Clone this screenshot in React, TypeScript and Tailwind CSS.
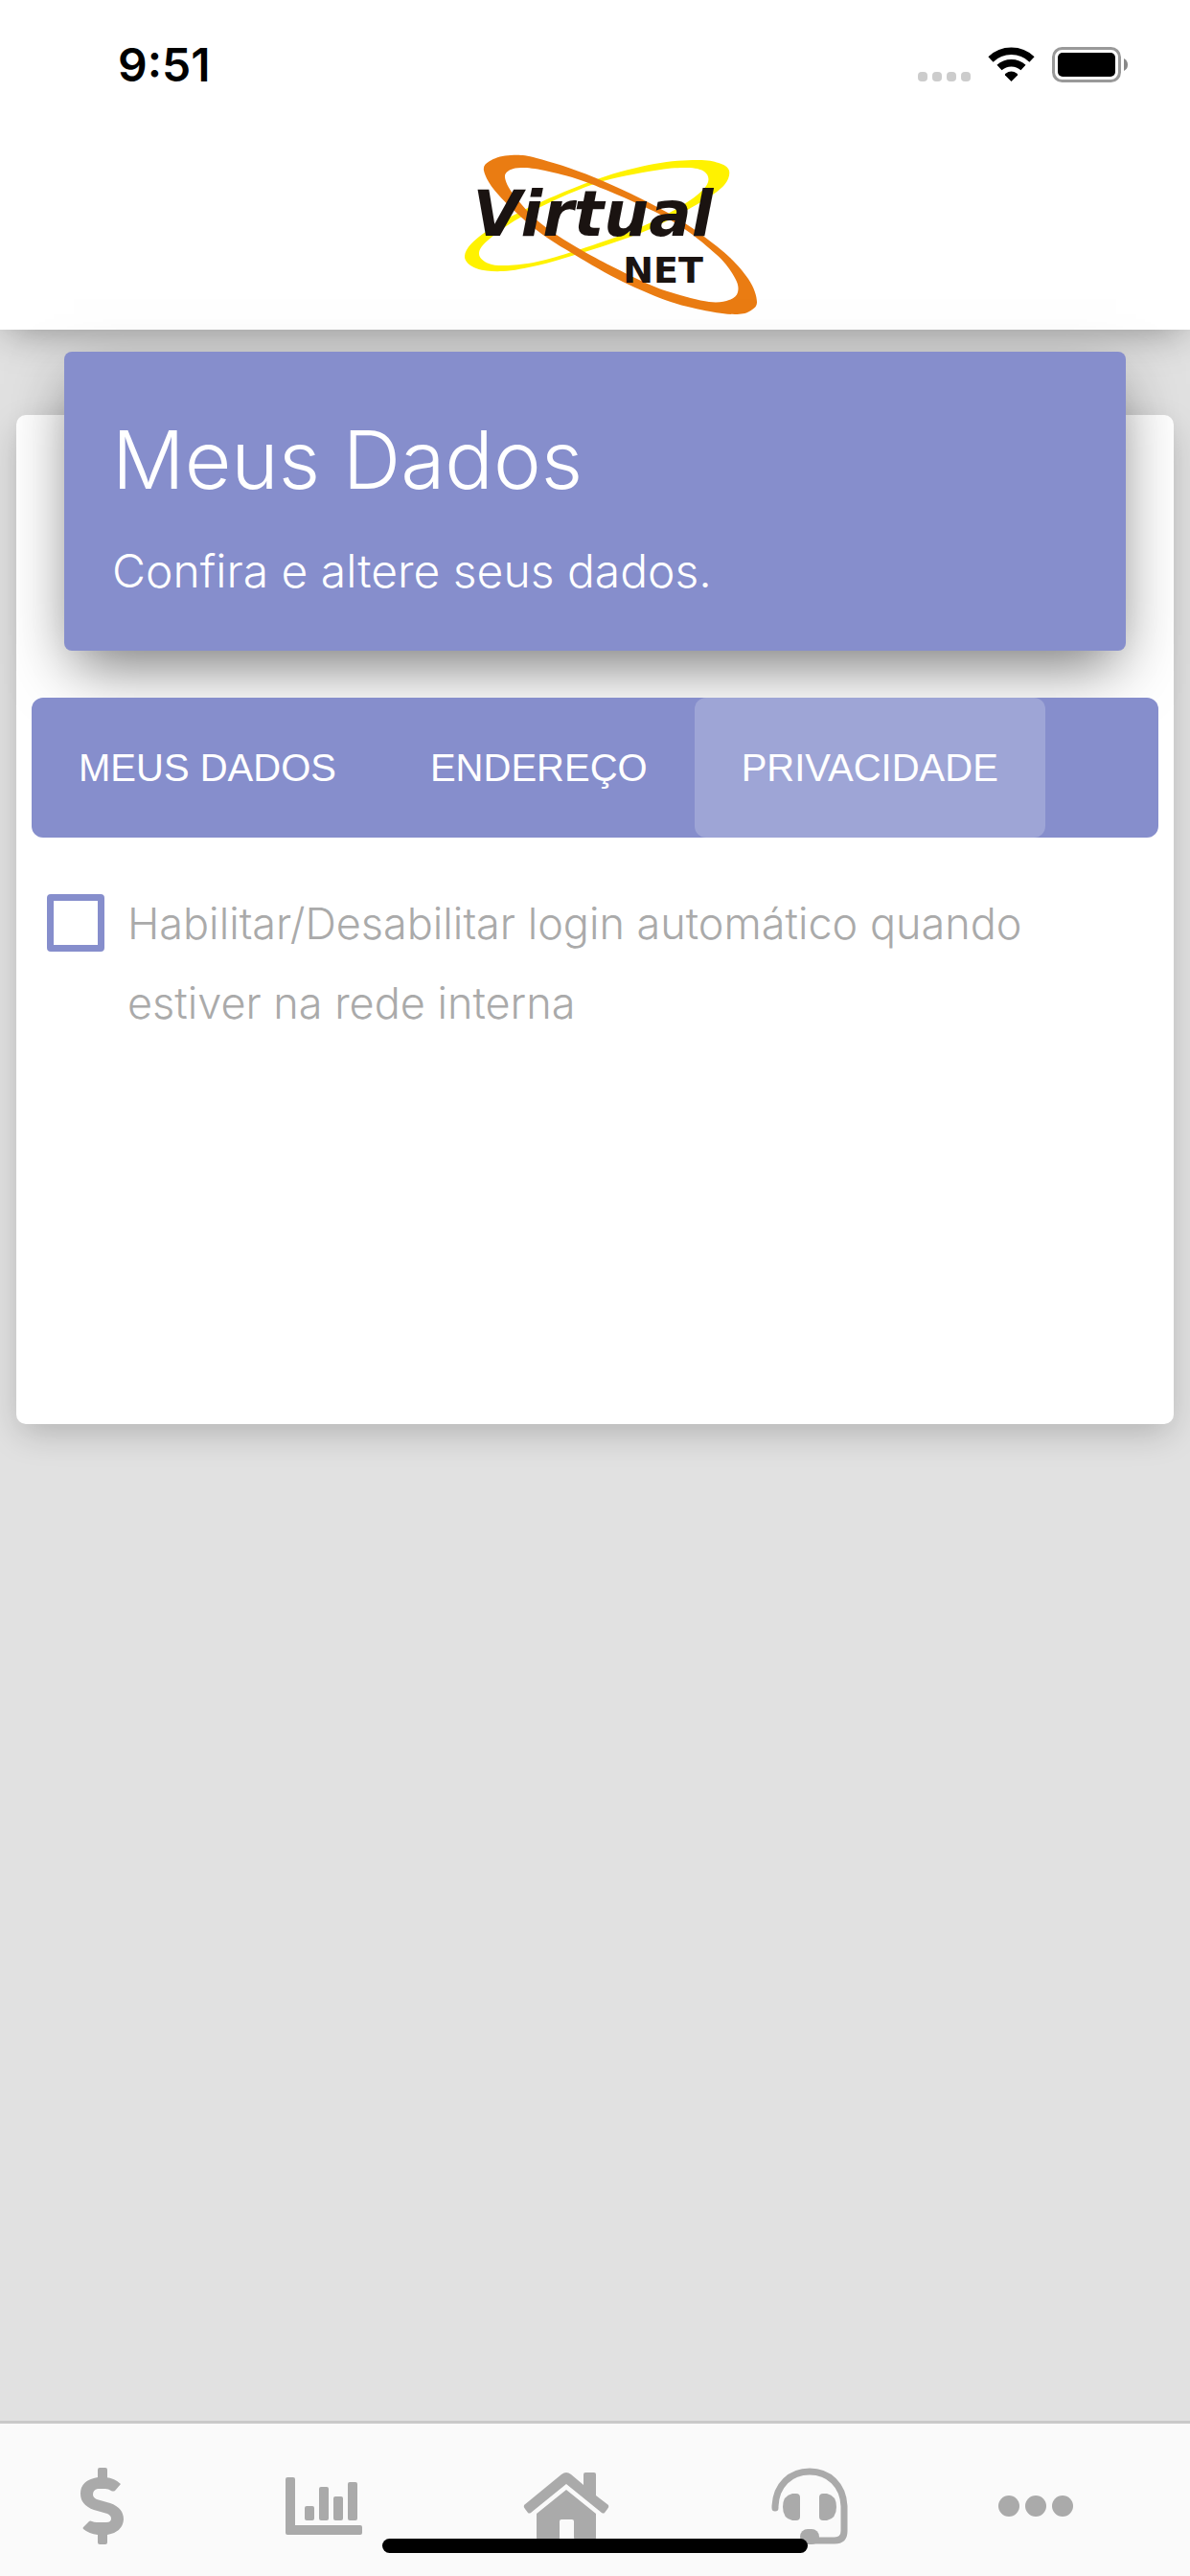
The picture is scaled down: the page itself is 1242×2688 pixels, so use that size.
import { useState } from "react";

const tabs = ["MEUS DADOS", "ENDEREÇO", "PRIVACIDADE"];

type Point = [number, number];

// closed smooth curve through the given points
function loop(points: Point[]) {
  const n = points.length;
  let d = `M${points[0][0]} ${points[0][1]}`;
  for (let i = 0; i < n; i++) {
    const [p0, p1, p2, p3] = [-1, 0, 1, 2].map((k) => points[(i + k + n) % n]);
    d += ` C${p1[0] + (p2[0] - p0[0]) / 6} ${p1[1] + (p2[1] - p0[1]) / 6}`;
    d += ` ${p2[0] - (p3[0] - p1[0]) / 6} ${p2[1] - (p3[1] - p1[1]) / 6}`;
    d += ` ${p2[0]} ${p2[1]}`;
  }
  return d + " Z";
}

const yellowRing =
  loop([[64, 107], [76, 120], [104, 123], [140, 117], [179, 106], [220, 93], [262, 77], [312, 50], [335, 33], [340, 18], [329, 10], [306, 7], [262, 11], [202, 27], [126, 59], [79, 87]]) +
  loop([[79, 105], [89, 115], [109, 117], [140, 113], [179, 102], [236, 82], [276, 63], [306, 44], [318, 30], [314, 19], [296, 15], [262, 18], [199, 32], [129, 63], [89, 90]]);

const orangeRing =
  loop([[84, 18], [92, 7], [112, 2], [139, 5], [199, 25], [276, 62], [332, 101], [360, 131], [369, 155], [361, 165], [346, 168], [320, 165], [279, 155], [229, 134], [179, 106], [139, 80], [99, 43]]) +
  loop([[106, 25], [112, 17], [126, 15], [152, 19], [196, 32], [276, 68], [326, 105], [346, 130], [349, 145], [340, 153], [319, 155], [279, 145], [246, 132], [186, 101], [142, 72], [115, 43]]);

function StatusBar() {
  return (
    <div className="flex items-center justify-between pl-[123px] pr-16 pt-11">
      <span className="font-['Inter'] text-5xl font-semibold leading-[48px] text-black">9:51</span>
      <svg viewBox="0 0 220 40" className="h-10 w-[220px]" aria-hidden="true">
        <g fill="#cccccc">
          <rect x="0" y="27" width="10" height="10" rx="4" />
          <rect x="15" y="27" width="10" height="10" rx="4" />
          <rect x="30" y="27" width="10" height="10" rx="4" />
          <rect x="45" y="27" width="10" height="10" rx="4" />
        </g>
        <g fill="none" stroke="#000" strokeWidth="7.5">
          <path d="M76 14 A31 31 0 0 1 119 14" />
          <path d="M85 22.500 A18.500 18.500 0 0 1 110 22.500" />
        </g>
        <path d="M97.500 37 L91 30.500 Q90.500 29.500 91.500 28.700 Q97.500 24.500 103.500 28.700 Q104.500 29.500 104 30.500 Z" />
        <rect x="141.500" y="2.500" width="69" height="34" rx="9" fill="none" stroke="#999" strokeWidth="3" />
        <rect x="146" y="7" width="60" height="25" rx="5" />
        <path d="M215 13 Q219 15 219 19.500 Q219 24 215 26 Z" fill="#888" />
      </svg>
    </div>
  );
}

function Logo() {
  return (
    <svg viewBox="0 0 400 170" className="h-[170px] w-[400px]" role="img" aria-label="Virtual NET">
      <path fill="#fff200" fillRule="evenodd" d={yellowRing} />
      <path fill="#ea7c12" fillRule="evenodd" d={orangeRing} />
      <g fill="#1a1311" fontFamily="DejaVu Sans" fontWeight="700" textAnchor="middle">
        <text x="198" y="86" fontSize="66" fontStyle="italic">Virtual</text>
        <text x="271" y="135" fontSize="38">NET</text>
      </g>
    </svg>
  );
}

function FooterNav() {
  return (
    <footer className="relative border-t-[3px] border-[#c9c9c9] bg-[#fafafa]">
      <nav className="grid h-[159px] grid-cols-[212fr_252fr_254fr_253fr_220fr] items-center justify-items-center pr-[51px] pt-3 text-[#aaaaaa]">
        <button aria-label="Financeiro">
          <svg viewBox="0 0 80 80" className="size-20" fill="currentColor">
            <path d="M36 10 H44 Q54 11 60 17 L54 24 Q52 25 50 24 Q47 22 44 22 H36 Q31 23 31 28 Q31 31 35 33 L49 37 Q63 42 63 54 Q62 67 46 70 H36 Q27 69 21 64 Q20 63 21 62 L27 56 Q28 55 30 56 Q32 57 35 57 H45 Q50 57 50 53 Q50 50 46 48 L32 44 Q18 39 18 27 Q18 13 36 10 Z" />
            <rect x="36" y="0" width="10" height="16" rx="2" />
            <rect x="36" y="64" width="10" height="16" rx="2" />
          </svg>
        </button>
        <button aria-label="Consumo">
          <svg viewBox="0 0 80 80" className="size-20" fill="currentColor">
            <path d="M0 12 Q0 10 2 10 H8 Q10 10 10 12 V60 H78 Q80 60 80 62 V68 Q80 70 78 70 H2 Q0 70 0 68 Z" />
            <rect x="20" y="40" width="10" height="15" rx="2" />
            <rect x="35" y="20" width="10" height="35" rx="2" />
            <rect x="50" y="30" width="10" height="25" rx="2" />
            <rect x="65" y="15" width="10" height="40" rx="2" />
          </svg>
        </button>
        <button aria-label="Início">
          <svg viewBox="0 0 90 80" className="h-20 w-[90px]" fill="currentColor">
            <path d="M1 39 L40 7 Q45 3 50 7 L63 18 V7 Q63 5 65 5 H74 Q76 5 76 7 V29 L89 39 Q90 41 88 43 L85 47 Q84 48 82 47 L45 17 L8 47 Q6 48 5 47 L2 43 Q0 41 1 39 Z" />
            <path d="M45 23 L76 48 V73 Q76 75 73 75 H55 Q53 75 53 73 V56 Q53 54 51 54 H40 Q38 54 38 56 V73 Q38 75 35 75 H17 Q14 75 14 73 V48 Z" />
          </svg>
        </button>
        <button aria-label="Suporte">
          <svg viewBox="0 0 80 80" className="size-20" fill="none" stroke="currentColor">
            <path d="M4 42 V40 C5 18 20 4 40 4 C60 4 75 18 76 40 V66 Q76 76 66 76 H42" strokeWidth="7" strokeLinecap="round" />
            <g fill="currentColor" stroke="none">
              <path d="M22 27 H26 Q30 27 30 31 V51 Q30 55 26 55 H22 Q12 53 12 41 Q12 29 22 27 Z" />
              <path d="M54 27 H58 Q68 29 68 41 Q68 53 58 55 H54 Q50 55 50 51 V31 Q50 27 54 27 Z" />
              <rect x="30" y="64" width="20" height="16" rx="8" />
            </g>
          </svg>
        </button>
        <button aria-label="Mais opções">
          <svg viewBox="0 0 78 80" className="h-20 w-[78px]" fill="currentColor">
            <circle cx="11" cy="40" r="11" />
            <circle cx="39" cy="40" r="11" />
            <circle cx="67" cy="40" r="11" />
          </svg>
        </button>
      </nav>
      <div className="absolute bottom-6 left-1/2 h-[15px] w-[444px] -translate-x-1/2 rounded-full bg-black" />
    </footer>
  );
}

export default function App() {
  const [active, setActive] = useState("PRIVACIDADE");
  const [autoLogin, setAutoLogin] = useState(false);

  return (
    <div className="flex min-h-screen flex-col bg-[#e1e1e1] font-['Inter',sans-serif]">
      <header className="bg-white shadow-[0_8px_40px_-8px_rgba(0,0,0,0.4)]">
        <StatusBar />
        <div className="flex justify-center pb-[14px] pt-[68px]">
          <Logo />
        </div>
      </header>

      <main className="flex-1 px-[17px] pt-[89px]">
        <section className="flex min-h-[1053px] flex-col rounded-[10px] bg-white px-4 shadow-[0_12px_36px_-4px_rgba(0,0,0,0.22)]">
          <div className="mx-[34px] -mt-[66px] rounded-lg bg-[#868ecc] px-[50px] pb-[43px] pt-[59px] text-white shadow-[0_24px_60px_-10px_rgba(0,0,0,0.55)]">
            <h1 className="text-[84px] font-light leading-[108px]">Meus Dados</h1>
            <p className="mt-[22px] text-[48px] font-light leading-[80px]">Confira e altere seus dados.</p>
          </div>

          <div role="tablist" className="mt-[49px] flex rounded-xl bg-[#868ecc] text-white">
            {tabs.map((tab) => (
              <button
                key={tab}
                role="tab"
                aria-selected={tab === active}
                onClick={() => setActive(tab)}
                className={`h-[146px] rounded-xl px-[49px] font-['Liberation_Sans',sans-serif] text-[40px] ${tab === active ? "bg-[#9ea5d6]" : ""}`}
              >
                {tab}
              </button>
            ))}
          </div>

          <label className="mt-12 flex items-start gap-6 px-4 text-[45px] font-light leading-[83px] text-[#aaaaaa]">
            <input
              type="checkbox"
              checked={autoLogin}
              onChange={(e) => setAutoLogin(e.target.checked)}
              className="mt-[11px] size-[60px] shrink-0 appearance-none rounded border-[7px] border-[#868ecc] checked:bg-[#868ecc]"
            />
            <span>Habilitar/Desabilitar login automático quando estiver na rede interna</span>
          </label>
        </section>
      </main>

      <FooterNav />
    </div>
  );
}
